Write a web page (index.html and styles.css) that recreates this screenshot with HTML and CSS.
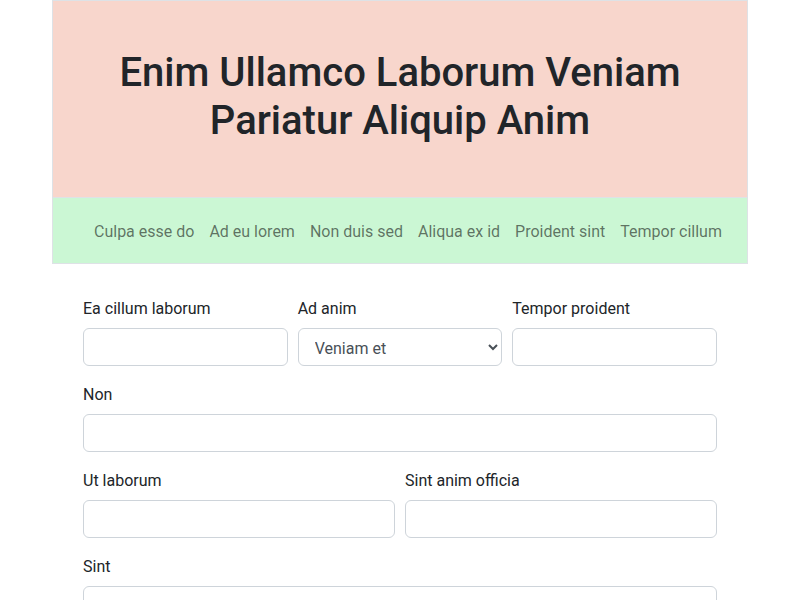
FILE: index.html
```html
<!DOCTYPE html>
<html lang="en">
<head>
<meta charset="utf-8">
<title>Enim Ullamco</title>
<link rel="stylesheet" href="styles.css">
</head>
<body>
<div class="container">
  <header class="hero">
    <h1 class="hero-title">Enim Ullamco Laborum Veniam Pariatur Aliquip Anim</h1>
  </header>
  <nav class="nav">
    <a class="nav-link" href="#">Culpa esse do</a>
    <a class="nav-link" href="#">Ad eu lorem</a>
    <a class="nav-link" href="#">Non duis sed</a>
    <a class="nav-link" href="#">Aliqua ex id</a>
    <a class="nav-link" href="#">Proident sint</a>
    <a class="nav-link" href="#">Tempor cillum</a>
  </nav>
  <form class="form">
    <div class="row row-3">
      <div class="field">
        <label class="label">Ea cillum laborum</label>
        <input class="control" type="text">
      </div>
      <div class="field">
        <label class="label">Ad anim</label>
        <select class="control select">
          <option>Veniam et</option>
        </select>
      </div>
      <div class="field">
        <label class="label">Tempor proident</label>
        <input class="control" type="text">
      </div>
    </div>
    <div class="row">
      <div class="field">
        <label class="label">Non</label>
        <input class="control" type="text">
      </div>
    </div>
    <div class="row row-2">
      <div class="field">
        <label class="label">Ut laborum</label>
        <input class="control" type="text">
      </div>
      <div class="field">
        <label class="label">Sint anim officia</label>
        <input class="control" type="text">
      </div>
    </div>
    <div class="row">
      <div class="field">
        <label class="label">Sint</label>
        <input class="control" type="text">
      </div>
    </div>
  </form>
</div>
</body>
</html>
```

FILE: styles.css
```css
html, body {
  margin: 0;
  padding: 0;
  background: #fff;
}
body {
  font-family: Roboto, "Liberation Sans", sans-serif;
  font-size: 16px;
  line-height: 1.5;
  color: #212529;
}
.container {
  width: 696px;
  margin: 0 auto;
}
.hero {
  background: #f8d6cc;
  border: 1px solid #dee2e6;
  border-bottom: none;
  padding: 48px 16px 52px;
  text-align: center;
}
.hero-title {
  margin: 0;
  font-size: 40px;
  line-height: 48px;
  font-weight: 500;
  color: #212529;
}
.nav {
  display: flex;
  background: #cbf7d4;
  border: 1px solid #dee2e6;
  padding: 22px 0 19px 33.5px;
}
.nav-link {
  padding: 0 7.5px;
  line-height: 24px;
  color: rgba(0, 0, 0, 0.55);
  text-decoration: none;
}
.form {
  padding: 32px 31px 0;
}
.row {
  display: grid;
  grid-template-columns: 1fr;
  column-gap: 10px;
  margin-bottom: 16px;
}
.row-3 {
  grid-template-columns: 1fr 1fr 1fr;
}
.row-2 {
  grid-template-columns: 1fr 1fr;
}
.field {
  min-width: 0;
}
.label {
  display: block;
  padding-top: 1px;
  margin-bottom: 7px;
  line-height: 24px;
}
.control {
  display: block;
  width: 100%;
  box-sizing: border-box;
  height: 38px;
  margin: 0;
  padding: 6px 12px;
  font: inherit;
  color: #212529;
  background: #fff;
  border: 1px solid #ced4da;
  border-radius: 6px;
}
.select {
  padding: 7px 8px 5px 12px;
  color: #495057;
}
```
